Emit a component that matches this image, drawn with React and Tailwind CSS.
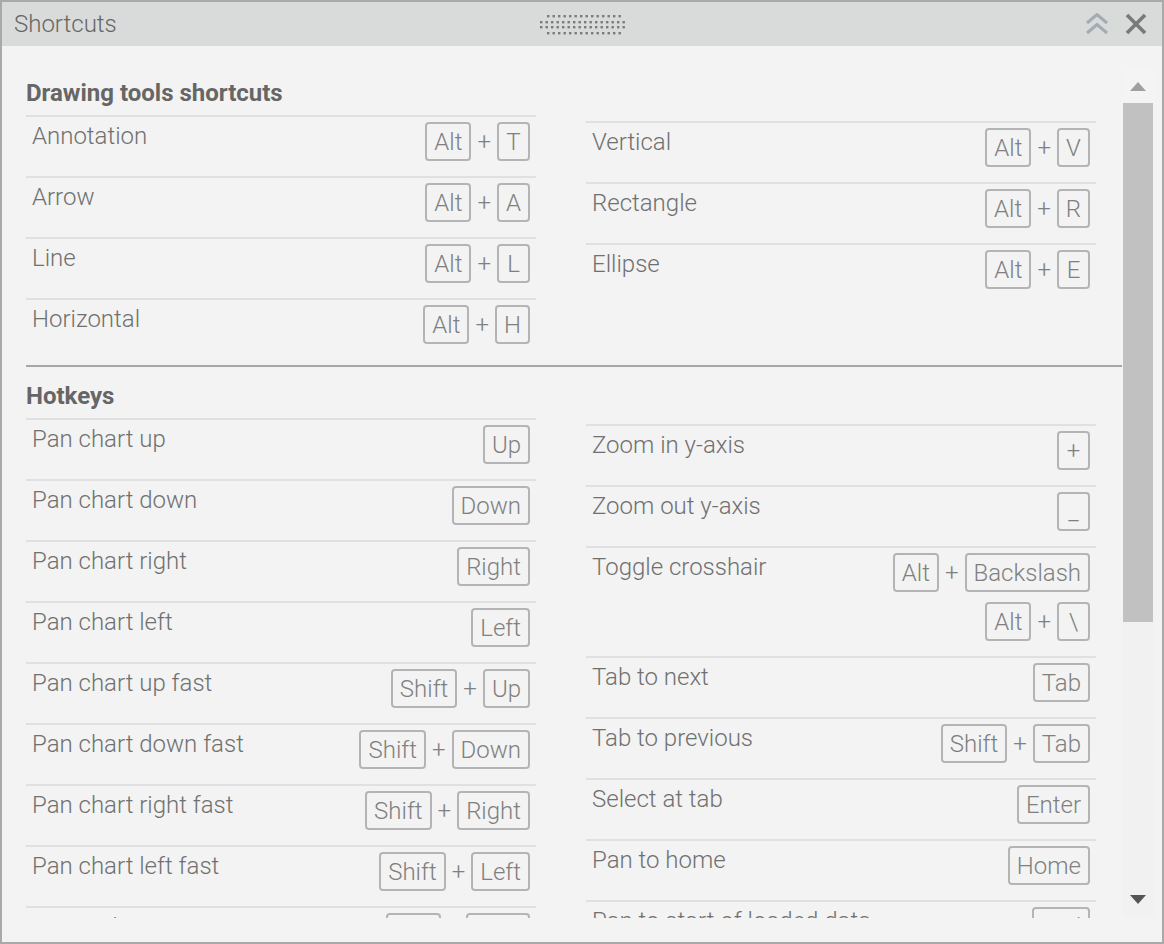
import React from 'react';

// Shortcut data: each row has a label and one or more key combos
const drawingLeft = [
  { label: 'Annotation', combos: [['Alt', 'T']] },
  { label: 'Arrow', combos: [['Alt', 'A']] },
  { label: 'Line', combos: [['Alt', 'L']] },
  { label: 'Horizontal', combos: [['Alt', 'H']] },
];

const drawingRight = [
  { label: 'Vertical', combos: [['Alt', 'V']] },
  { label: 'Rectangle', combos: [['Alt', 'R']] },
  { label: 'Ellipse', combos: [['Alt', 'E']] },
];

const hotkeysLeft = [
  { label: 'Pan chart up', combos: [['Up']] },
  { label: 'Pan chart down', combos: [['Down']] },
  { label: 'Pan chart right', combos: [['Right']] },
  { label: 'Pan chart left', combos: [['Left']] },
  { label: 'Pan chart up fast', combos: [['Shift', 'Up']] },
  { label: 'Pan chart down fast', combos: [['Shift', 'Down']] },
  { label: 'Pan chart right fast', combos: [['Shift', 'Right']] },
  { label: 'Pan chart left fast', combos: [['Shift', 'Left']] },
  { label: 'Zoom chart in', combos: [['Ctrl', 'Plus']] },
];

const hotkeysRight = [
  { label: 'Zoom in y-axis', combos: [['+']] },
  { label: 'Zoom out y-axis', combos: [['_']] },
  { label: 'Toggle crosshair', combos: [['Alt', 'Backslash'], ['Alt', '\\']] },
  { label: 'Tab to next', combos: [['Tab']] },
  { label: 'Tab to previous', combos: [['Shift', 'Tab']] },
  { label: 'Select at tab', combos: [['Enter']] },
  { label: 'Pan to home', combos: [['Home']] },
  { label: 'Pan to start of loaded data', combos: [['End']] },
];

const Key = ({ children }) => (
  <span className="h-[39px] min-w-[33px] px-[7px] flex items-center justify-center border-2 border-[#b4b4b4] rounded-[4px] text-[24px] font-light leading-none text-[#808080]">
    {children}
  </span>
);

const Row = ({ label, combos }) => (
  <div className="flex justify-between border-t-2 border-[#dfe0df] px-[6px] pt-[5px] pb-[15px]">
    <span className="text-[24px] font-light leading-[28px] text-[#707070]">{label}</span>
    <div className="flex flex-col items-end gap-[10px]">
      {combos.map((keys, i) => (
        <div key={i} className="flex items-center">
          {keys.map((k, j) => (
            <React.Fragment key={j}>
              {j > 0 && <span className="mx-[6px] text-[24px] font-light leading-none text-[#808080]">+</span>}
              <Key>{k}</Key>
            </React.Fragment>
          ))}
        </div>
      ))}
    </div>
  </div>
);

const Section = ({ title, left, right }) => (
  <div>
    <h2 className="pt-[2px] text-[24px] leading-[28px] font-bold text-[#666] mb-[8px]">{title}</h2>
    <div className="grid grid-cols-[510px_510px] gap-x-[50px] items-start">
      <div>
        {left.map((r) => <Row key={r.label} {...r} />)}
      </div>
      <div className="mt-[6px]">
        {right.map((r) => <Row key={r.label} {...r} />)}
      </div>
    </div>
  </div>
);

const Gripper = () => {
  const rows = [
    { y: 1, x0: 8, n: 14 },
    { y: 7, x0: 1, n: 16 },
    { y: 12, x0: 1, n: 16 },
    { y: 18, x0: 8, n: 14 },
  ];
  return (
    <svg width="90" height="21" viewBox="0 0 90 21" className="ml-[6px]">
      {rows.map((r, i) =>
        Array.from({ length: r.n }).map((_, j) => (
          <rect key={`${i}-${j}`} x={r.x0 + j * 5.5} y={r.y} width="2.4" height="2.4" fill="#7a7a7a" />
        ))
      )}
    </svg>
  );
};

const App = () => {
  return (
    <div className="w-[1164px] h-[944px] border-2 border-[#a9a9a9] bg-[#f2f3f2] flex flex-col overflow-hidden" style={{ fontFamily: 'Roboto, "Liberation Sans", sans-serif' }}>
      {/* Title bar */}
      <div className="h-[44px] shrink-0 bg-[#d9dbda] flex items-center">
        <div className="flex-1 pl-[12px] text-[24px] font-light text-[#666]">Shortcuts</div>
        <Gripper />
        <div className="flex-1 flex justify-end items-center gap-[16px] pr-[15px]">
          <svg width="24" height="22" viewBox="0 0 24 22" fill="none" stroke="#a3abb3" strokeWidth="3">
            <polyline points="2,10 12,1.5 22,10" />
            <polyline points="2,20 12,11.5 22,20" />
          </svg>
          <svg width="22" height="22" viewBox="0 0 22 22" fill="none" stroke="#787878" strokeWidth="3.6">
            <line x1="2" y1="2" x2="20" y2="20" />
            <line x1="20" y1="2" x2="2" y2="20" />
          </svg>
        </div>
      </div>

      {/* Body */}
      <div className="flex flex-1">
        <div className="w-[1120px] h-[872px] overflow-hidden pl-[24px] pt-[31px]">
          <Section title="Drawing tools shortcuts" left={drawingLeft} right={drawingRight} />
          <div className="mt-[6px] h-[2px] bg-[#a6a6a6]" />
          <div className="mt-[13px]">
            <Section title="Hotkeys" left={hotkeysLeft} right={hotkeysRight} />
          </div>
        </div>

        {/* Scrollbar */}
        <div className="w-[32px] pt-[24px] flex flex-col">
          <div className="h-[33px] bg-[#f4f4f4] flex items-center justify-center">
            <svg width="16" height="9" viewBox="0 0 16 9">
              <polygon points="0,9 8,0 16,9" fill="#a0a0a0" />
            </svg>
          </div>
          <div className="h-[519px] bg-[#c1c1c1] mx-[1px]" />
          <div className="h-[294px] bg-[#f1f1f1] flex items-end justify-center pb-[12px]">
            <svg width="16" height="9" viewBox="0 0 16 9">
              <polygon points="0,0 16,0 8,9" fill="#555" />
            </svg>
          </div>
        </div>
      </div>
    </div>
  );
};

export default App;
